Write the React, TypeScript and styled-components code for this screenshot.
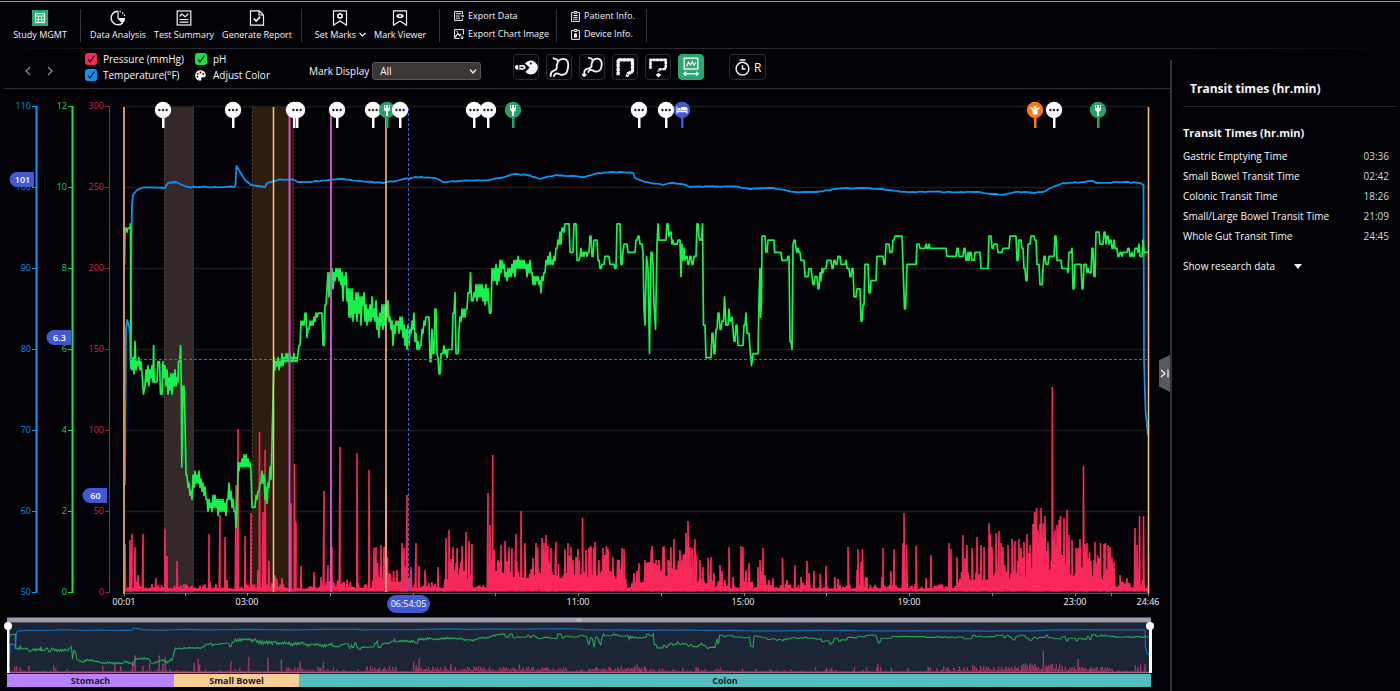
import React from 'react';
import styled, { createGlobalStyle } from 'styled-components';

const GlobalStyle = createGlobalStyle`
  * { box-sizing: border-box; }
  body {
    margin: 0;
    background: #020206;
    color: #f6f6f8;
    font-family: 'Open Sans', 'Noto Sans', sans-serif;
    font-size: 10px;
  }
  button, select, input { font: inherit; color: inherit; }
`;

/* ---------- data ---------- */

type Point = [number, number];
type Band = [number, number, number?];

const makeRandom = (seed: number) => () => {
  seed = (seed * 1664525 + 1013904223) % 4294967296;
  return seed / 4294967296;
};

const PH: Band[] = [
  [124.5, 264], [125, 230], [127, 228, 232], [130, 228, 230], [130.5, 223], [131, 365], [132, 350, 368], [133, 358, 382],
  [134, 357, 375], [135, 341], [136, 360, 369], [139, 356, 366], [142, 360, 373], [143.5, 393], [145, 367, 384],
  [149, 365, 384], [153, 364, 382], [153.6, 345], [154.2, 380], [158, 362, 378], [160.5, 393], [163, 362, 382],
  [166, 362, 384], [168, 372, 394], [172, 372, 394], [175, 370, 394], [177, 378, 385], [178.5, 362, 385],
  [180.6, 346], [181.2, 380], [181.8, 467], [183, 386, 455], [184, 385], [185, 420, 460], [186, 410, 477],
  [187, 474, 485], [190, 484, 495], [192, 490, 498], [193, 474, 490], [196, 471, 484], [199, 471, 486], [202, 482, 492],
  [205, 487, 500], [208, 497, 511], [212, 498, 511], [214, 490, 508], [218, 498, 514], [222, 498, 513], [226, 502, 516],
  [229, 483, 500], [231, 490, 506], [234, 500, 512], [236.2, 527], [237.5, 480, 490], [238, 463, 475], [241, 461, 468],
  [244, 455, 467], [249, 455, 467], [251, 464, 472], [252, 507], [255, 500, 507], [258, 490, 500], [260, 482, 490],
  [262, 471, 480], [264, 475, 492], [266, 488, 513], [268, 482, 503], [270, 465, 480], [271.5, 464, 480], [273, 400],
  [274, 356, 372], [278, 356, 370], [282, 355, 368], [286, 354, 364], [290, 353, 364], [294, 354, 362], [298, 354, 366],
  [299, 345], [301, 320, 328], [304, 318, 326], [305, 315], [307, 334, 338], [309, 321, 329], [313, 318, 326],
  [316, 312, 320], [319, 311, 315], [320, 312, 320], [323, 345], [325, 305], [327, 283, 290], [328, 272, 300],
  [332, 269, 295], [336, 269, 280], [340, 269, 285], [343, 272, 300], [346, 272, 285], [348, 290, 325], [352, 290, 328],
  [357, 290, 322], [361, 285, 325], [364, 292, 310], [366, 305, 335], [370, 305, 325], [372, 298, 325], [376, 302, 325],
  [378, 318, 345], [381, 310, 325], [382, 304, 330], [386, 305, 325], [388, 302, 315], [390, 317, 325], [393, 317, 345],
  [397, 317, 325], [400, 318, 342], [402, 318, 324], [404, 325, 353], [408, 325, 352], [411, 322, 335], [414, 313, 328],
  [416, 335, 353], [420, 345, 353], [423, 318, 335], [426, 317, 322], [428, 318], [430, 360], [432, 330], [433, 352],
  [435, 309], [437, 355], [438, 350, 358], [439, 373], [441, 352], [444, 345, 357], [448, 348, 358], [451, 350],
  [453, 312], [455, 293], [456, 353], [459, 316, 330], [462, 308, 318], [466, 308, 318], [468, 293, 300], [470.5, 273],
  [471.5, 300], [473, 290, 300], [477, 280, 300], [480, 285, 303], [485, 285, 303], [488, 288, 305], [489.5, 313],
  [492, 270, 290], [496, 263, 285], [500, 261, 280], [502, 261, 270], [507, 268, 282], [510, 268, 275], [515, 256, 275],
  [519, 257, 268], [524, 260, 270], [528, 265, 280], [530, 260, 272], [534, 275, 292], [536, 275, 280], [541, 276, 293],
  [543, 273, 282], [547, 255, 265], [550, 254, 266], [554, 258, 265], [557, 240, 250], [560, 232, 245], [562, 226, 240],
  [565, 224, 235], [569, 224], [570, 252], [573, 252], [574, 224], [576, 224], [577, 259], [580, 245, 255],
  [584, 252, 257], [588, 252, 255], [590, 236], [592, 256], [594, 240], [598, 260], [600, 268], [602, 264], [604, 264],
  [605, 256], [608, 256], [610, 264], [615, 264, 267], [617, 224], [619, 224], [621, 263], [623, 240, 253],
  [628, 243, 253], [632, 252], [636, 232, 242], [640, 238, 245], [643, 252], [644, 310], [645, 324], [646.5, 256],
  [648, 268], [649.5, 353], [651, 252], [653, 264], [654, 305], [655.5, 328], [657, 245], [658, 224], [659, 240],
  [664, 241], [667, 225, 235], [672, 235, 245], [678, 242, 250], [681, 240, 276], [685, 250, 260], [690, 258, 268],
  [694, 255, 260], [697, 224], [699, 236], [700, 228, 240], [702.5, 224], [703.5, 325], [706, 357], [710, 350, 357],
  [712, 333, 340], [714, 353], [716, 330, 345], [718, 314], [720, 330, 335], [722, 310, 320], [724.5, 296], [726, 325],
  [729, 309, 325], [733, 322, 330], [734, 340], [736, 325], [738, 345], [743, 345], [744, 325], [746, 313], [747, 335],
  [750, 350], [751.5, 365], [753, 353], [758, 353, 355], [759, 300], [760, 268], [760.6, 316], [761.5, 300], [762, 236],
  [765, 236], [766, 251], [768, 240, 252], [771, 240], [774, 240], [774.5, 252], [779, 252, 257], [782, 260],
  [788, 257, 263], [789, 257], [790, 340], [792, 350], [793, 244], [794, 240], [796, 250, 255], [799, 245, 252],
  [801, 260], [804, 260], [805, 277], [809, 265, 270], [812, 275, 285], [815, 275, 289], [818, 275, 289],
  [821, 268, 280], [824, 268, 272], [827, 261], [831, 260, 268], [834, 260, 285], [836, 260, 265], [838, 256],
  [841, 265], [846, 260, 268], [848, 268, 277], [852, 268, 275], [854, 296], [857, 289], [860, 289], [861, 321],
  [863, 293, 305], [865, 266], [868, 265], [869, 292], [871, 265, 280], [875, 280], [877, 257], [880, 257, 265],
  [884, 256, 265], [886, 244], [890, 245, 252], [893, 240], [895, 236], [902, 236], [903, 263], [904.5, 309],
  [905.5, 309], [907, 265], [915, 265], [917, 244], [920, 248], [926, 244, 249], [930, 244, 248], [938, 248],
  [946, 248], [947, 256], [955, 256], [957, 248], [959, 256], [964, 248, 262], [968, 252, 262], [975, 252, 260],
  [980, 252], [981, 268], [987, 268], [989, 236], [992, 240, 248], [998, 245, 252], [1003, 248], [1009, 248],
  [1010, 236], [1015, 236], [1017, 260], [1019, 240], [1022, 248], [1024, 268], [1026, 280], [1028, 245], [1031, 236],
  [1035, 236, 240], [1037, 265], [1039, 263], [1040, 285], [1043, 255, 268], [1046, 258, 265], [1049, 258],
  [1053, 245, 258], [1055, 236], [1057, 262], [1062, 268, 272], [1068, 272], [1069, 252], [1072, 248], [1073, 288],
  [1075, 265], [1081, 265], [1082, 288], [1084, 265, 275], [1089, 265, 272], [1092, 248], [1094, 276], [1096, 232],
  [1100, 232, 245], [1104, 232, 246], [1110, 240, 248], [1114, 242, 250], [1118, 252, 256], [1122, 250, 256],
  [1128, 248, 256], [1133, 248, 256], [1140, 244, 256], [1144, 240, 252], [1148, 252],
];

const TEMPERATURE: Point[] = [
  [125, 485], [125.5, 400], [126, 330], [127, 320], [129, 326], [130, 336], [130.6, 368], [131, 300], [131.5, 230],
  [132, 205], [133, 195], [137, 190], [143, 187.5], [165, 188], [168, 183], [176, 182], [182, 185], [188, 187],
  [234, 187], [235.5, 185], [236.5, 166], [240, 172], [245, 180], [251, 185], [258, 186], [265, 187], [267, 183],
  [275, 181], [279, 179.5], [293, 179.5], [298, 182], [310, 182], [330, 180], [343, 179], [360, 181], [383, 183],
  [400, 180], [415, 177], [435, 178], [443, 182], [460, 181], [490, 180], [500, 178], [515, 174], [527, 175],
  [540, 179], [556, 175], [572, 176], [585, 177], [598, 173], [620, 172], [633, 173], [635, 178], [645, 182],
  [663, 185], [670, 183], [682, 184], [690, 187], [700, 186.5], [735, 186.5], [750, 189], [770, 188], [785, 190],
  [795, 192], [817, 192], [835, 189], [860, 188], [880, 189], [907, 192], [975, 192], [990, 194], [1005, 194.5],
  [1015, 192], [1035, 193], [1043, 192], [1053, 187], [1063, 183], [1085, 182], [1093, 181], [1096, 183],
  [1125, 182], [1140, 183], [1143.5, 185], [1144, 360], [1145.5, 410], [1148, 435],
];

const PRESSURE_PEAKS: Point[] = [
  [125, 544], [130, 540], [132, 534], [135, 547], [138, 575], [143, 534], [156, 578], [165, 529], [167, 556],
  [177, 561], [209, 534], [210, 582], [220, 515], [225, 537], [227, 580], [236, 485], [238, 429], [245, 536],
  [251, 513], [258, 570], [259.5, 432], [263, 512], [265, 450], [269, 561], [275, 575], [282, 578], [291, 503],
  [294.5, 464], [296, 522], [301, 566], [314, 572], [321, 577], [324, 491], [328, 565], [332, 547], [340, 447],
  [357, 453], [369, 470], [374, 548], [376, 547], [381, 545], [384, 547], [386, 487], [387.5, 557], [402, 543],
  [404, 548], [407, 495], [411, 567], [416, 543], [419, 566], [425, 570], [432, 582], [438, 567], [446, 538],
  [449, 530], [453, 547], [457, 548], [460, 568], [462, 546], [466, 532], [469, 541], [472, 544], [488, 493],
  [490, 525], [492.8, 455], [494, 550], [498, 560], [501, 545], [505, 541], [509, 547], [512, 548], [516, 534],
  [521, 511], [525, 543], [533, 558], [536, 543], [542, 538], [544, 543], [546, 535], [548, 546], [551, 548],
  [556, 542], [565, 549], [568, 543], [571, 547], [573, 560], [578, 549], [582.5, 518], [586, 550], [589, 548],
  [591, 547], [595, 542], [599, 560], [603, 548], [608, 550], [613, 557], [619, 567], [622, 548], [624, 549],
  [634, 573], [639, 563], [645, 560], [648, 562], [652, 546], [656, 560], [659, 560], [663, 547], [664, 546],
  [668, 560], [671, 547], [674, 539], [678, 567], [682, 560], [686, 533], [688, 521], [690, 547], [692, 548],
  [695, 539], [700, 560], [703, 567], [708, 558], [711, 557], [714, 573], [720, 565], [722, 571], [729, 547],
  [733, 577], [741, 546], [743, 547], [746, 570], [749, 563], [758, 567], [760, 560], [763, 548], [765, 575],
  [769, 580], [773, 578], [782.5, 558], [787, 580], [795, 565], [801, 577], [807, 561], [809, 573], [814, 571],
  [820, 574], [826, 566], [835, 577], [838, 579], [848, 547], [857, 570], [858, 549], [861, 562], [862.5, 549],
  [867, 577], [883, 548], [882, 577], [891, 571], [894, 549], [903, 543], [904, 513], [906.5, 545], [916, 546],
  [926, 578], [931, 555], [949, 543], [951, 549], [957, 557], [963, 535], [965, 558], [967, 545], [972, 548],
  [977, 537], [981, 545], [984, 547], [989, 523], [990.5, 534], [992, 547], [996, 533], [999, 531], [1001, 543],
  [1003, 547], [1008, 545], [1012, 539], [1015, 541], [1019, 539], [1021, 549], [1024, 542], [1027, 534], [1030, 545],
  [1033, 524], [1034.5, 512], [1036.5, 508], [1038, 530], [1041, 508], [1043, 530], [1045, 516], [1052.3, 387],
  [1055, 530], [1057, 525], [1059, 520], [1060.5, 516], [1064, 518], [1067, 510], [1069, 535], [1072, 540],
  [1076, 548], [1078, 548], [1080, 539], [1083.5, 466], [1085, 544], [1087, 543], [1091, 561], [1094, 560],
  [1095, 542], [1099, 560], [1100.5, 543], [1104, 544], [1105.5, 543], [1108, 545], [1110, 547], [1114, 562],
  [1120, 575], [1127, 578], [1135, 528], [1137, 545], [1139.5, 516], [1143.5, 516],
];

/* x, height of the busy floor of the trace from there on */
const PRESSURE_FLOOR: Point[] = [
  [124, 5], [133, 16], [142, 6], [262, 10], [272, 16], [277, 6], [310, 9], [326, 22], [333, 11], [372, 28], [386, 26],
  [402, 28], [412, 12], [446, 36], [472, 7], [488, 36], [496, 40], [530, 46], [560, 40], [590, 46], [613, 32],
  [626, 7], [632, 24], [646, 42], [680, 42], [697, 22], [714, 14], [726, 6], [740, 24], [752, 5], [757, 20],
  [765, 8], [828, 6], [856, 14], [866, 6], [958, 24], [975, 30], [1000, 30], [1015, 42], [1032, 68], [1070, 46],
  [1080, 38], [1113, 10], [1130, 14], [1145, 5],
];

/* the sensor reports pH in steps of 0.1 */
const quantize = (y: number) => 592.5 - Math.round((592.5 - y) / 4.05) * 4.05;

const buildPh = () => {
  const random = makeRandom(7);
  const points: Point[] = [];
  let up = false;
  for (let i = 0; i < PH.length - 1; i++) {
    const [x0, t0, b0 = t0] = PH[i];
    const [x1, t1, b1 = t1] = PH[i + 1];
    const noisy = b0 > t0 && b1 > t1;
    const start = quantize(up ? t0 : b0);
    points.push([x0, start]);
    if (noisy) {
      for (let x = x0 + 1; x < x1; x += 1) {
        const f = (x - x0) / (x1 - x0);
        const top = t0 + (t1 - t0) * f;
        const bottom = b0 + (b1 - b0) * f;
        const hold = x0 > 560 && random() < 0.45;
        if (hold) {
          points.push([x, points[points.length - 1][1]]);
          continue;
        }
        up = !up;
        const edge = random() * 0.35;
        points.push([x, quantize(up ? top + (bottom - top) * edge : bottom - (bottom - top) * edge)]);
      }
    } else if (x1 - x0 > 1.5) {
      points.push([x1 - 1, start]);
    }
    up = !up;
  }
  points.push([PH[PH.length - 1][0], PH[PH.length - 1][1]]);
  return points;
};

const buildTemperature = () => {
  const random = makeRandom(21);
  return TEMPERATURE.flatMap(([x, y], i): Point[] => {
    const next = TEMPERATURE[i + 1];
    if (!next || next[0] - x < 8) return [[x, y]];
    const result: Point[] = [[x, y]];
    for (let step = x + 3; step < next[0] - 2; step += 3) {
      const f = (step - x) / (next[0] - x);
      result.push([step, y + (next[1] - y) * f + (random() - 0.5)]);
    }
    return result;
  });
};

const buildPressure = () => {
  const random = makeRandom(99);
  const samples: Point[] = [];
  let zone = 0;
  let low = false;
  for (let x = 124; x < 1148; x += 0.8) {
    while (zone < PRESSURE_FLOOR.length - 1 && PRESSURE_FLOOR[zone + 1][0] <= x) zone++;
    const height = PRESSURE_FLOOR[zone][1];
    low = !low;
    const r = random();
    const floor = height > 20 ? 0.3 : 0.15;
    samples.push([x, low ? 591 - r * 2 : 590 - height * (floor + (1 - floor) * r * r)]);
  }
  PRESSURE_PEAKS.forEach(([x, y]) => {
    samples.push([x - 0.8, 591], [x, y], [x + 0.8, 591]);
  });
  return samples.sort((a, b) => a[0] - b[0]);
};

const toPath = (points: Point[]) =>
  points.map(([x, y], i) => `${i ? 'L' : 'M'}${x.toFixed(1)} ${y.toFixed(1)}`).join('');

const toOverview = (points: Point[]): Point[] =>
  points.map(([x, y]) => [8 + ((x - 124) / 1024) * 1142, 672 - (592 - y) * 0.103]);

const phPoints = buildPh();
const temperaturePoints = buildTemperature();
const pressurePoints = buildPressure();
const phPath = toPath(phPoints);
const temperaturePath = toPath(temperaturePoints);
const pressurePath = toPath(pressurePoints);
const phOverview = toPath(toOverview(phPoints));
const temperatureOverview = toPath(toOverview(temperaturePoints));
const pressureOverview = toPath(toOverview(pressurePoints));

const GRID_ROWS = [106.5, 187.5, 268.5, 349.5, 430.5, 511.5, 592.5];

const AXES = [
  { x: 36, color: '#0a97f5', text: '#0d8ce4', width: 2, labels: ['110', '100', '90', '80', '70', '60', '50'] },
  { x: 72, color: '#15e34b', text: '#15d94a', width: 2, labels: ['12', '10', '8', '6', '4', '2', '0'] },
  { x: 109, color: '#a81c40', text: '#d6244f', width: 1, labels: ['300', '250', '200', '150', '100', '50', '0'] },
];

const READINGS = [
  { x: 9, y: 179.5, value: '101' },
  { x: 46, y: 337.5, value: '6.3' },
  { x: 82, y: 495.5, value: '60' },
];

const TIME_LABELS: [number, string][] = [
  [124, '00:01'], [247, '03:00'], [578, '11:00'], [743, '15:00'], [909, '19:00'], [1075, '23:00'], [1148, '24:46'],
];
const TIME_TICKS = [124, 185, 247, 330, 413, 495, 578, 661, 744, 826, 909, 992, 1075, 1111, 1148];

type PinKind = 'note' | 'meal' | 'sleep' | 'toilet';
const PINS: [number, PinKind][] = [
  [163, 'note'], [233, 'note'], [294, 'note'], [297, 'note'], [337, 'note'], [373, 'note'], [387, 'meal'],
  [400, 'note'], [474, 'note'], [488, 'note'], [513, 'meal'], [639, 'note'], [666, 'note'], [682, 'sleep'],
  [1035, 'toilet'], [1054, 'note'], [1098, 'meal'],
];
const PIN_COLORS: Record<PinKind, string> = { note: '#ffffff', meal: '#26a269', sleep: '#4158d6', toilet: '#fb7a10' };

const TRANSIT_TIMES = [
  ['Gastric Emptying Time', '03:36'],
  ['Small Bowel Transit Time', '02:42'],
  ['Colonic Transit Time', '18:26'],
  ['Small/Large Bowel Transit Time', '21:09'],
  ['Whole Gut Transit Time', '24:45'],
];

/* ---------- layout ---------- */

const Page = styled.div`
  display: flex;
  flex-direction: column;
  min-height: 100vh;
  padding-top: 1px;
`;

const Toolbar = styled.header`
  display: flex;
  align-items: center;
  height: 47px;
  border-top: 1px solid #8d9896;
`;

const Rule = styled.div`
  height: 1px;
  background: linear-gradient(90deg, transparent 10px, #262833 160px, #262833 1150px, transparent 1390px);
`;

const Group = styled.div<{ $width: number; $align?: string }>`
  display: flex;
  align-items: center;
  justify-content: ${p => p.$align || 'center'};
  gap: 8px;
  min-width: ${p => p.$width}px;
  height: 33px;
  border-right: 1px solid #34353f;
  font-size: 9px;
`;

const Stack = styled.div`
  display: flex;
  flex-direction: column;
  gap: 6px;
  padding-left: 14px;
`;

const PlainButton = styled.button`
  display: inline-flex;
  align-items: center;
  gap: 4px;
  padding: 0;
  border: 0;
  background: none;
  white-space: nowrap;
  cursor: pointer;
`;

const ToolButton = styled(PlainButton)`
  flex-direction: column;
  gap: 3px;
  line-height: 12px;
`;

const SmallTool = styled(PlainButton)`
  line-height: 12px;
`;

const Label = styled.span`
  display: inline-flex;
  align-items: center;
  gap: 3px;
`;

const Body = styled.div`
  display: grid;
  grid-template-columns: minmax(0, 1fr) 230px;
  flex: 1;
`;

const ChartColumn = styled.main`
  position: relative;
  display: flex;
  flex-direction: column;
`;

const Controls = styled.div`
  display: flex;
  align-items: center;
  height: 40px;
  margin-left: 4px;
  padding-bottom: 3px;
  border-bottom: 1px solid #2c2d38;
`;

const Pager = styled.div`
  display: flex;
  gap: 12px;
  width: 81px;
  padding: 8px 0 0 19px;
`;

const PagerButton = styled(PlainButton)`
  color: #8f9098;
`;

const Series = styled.fieldset`
  display: grid;
  grid-template-columns: 110px 110px;
  row-gap: 4px;
  width: 224px;
  margin: 0;
  padding: 0;
  border: 0;
`;

const SeriesLabel = styled.label`
  display: flex;
  align-items: center;
  gap: 6px;
  height: 12px;
`;

const CheckBox = styled.span<{ $color: string }>`
  display: grid;
  width: 12px;
  height: 12px;
  border-radius: 3px;
  background: ${p => p.$color};
  & > * { grid-area: 1 / 1; }
  & > svg { pointer-events: none; }
`;

const CheckInput = styled.input`
  appearance: none;
  width: 12px;
  height: 12px;
  margin: 0;
`;

const AdjustButton = styled(PlainButton)`
  height: 12px;
  gap: 7px;
`;

const SelectLabel = styled.label`
  display: flex;
  align-items: center;
  gap: 3px;
  padding-top: 8px;
  white-space: nowrap;
`;

const SelectBox = styled.span`
  display: grid;
  align-items: center;
  width: 109px;
  & > * { grid-area: 1 / 1; }
  & > svg { justify-self: end; margin-right: 4px; pointer-events: none; }
`;

const Select = styled.select`
  appearance: none;
  height: 18px;
  padding: 0 7px;
  border: 1px solid #55555e;
  border-radius: 3px;
  background: #3b3735;
  line-height: 14px;
`;

const ModeBar = styled.div`
  display: flex;
  gap: 7px;
  margin-left: 32px;
`;

const ModeButton = styled.button<{ $active?: boolean; $wide?: boolean }>`
  display: flex;
  align-items: center;
  justify-content: center;
  gap: 3px;
  width: ${p => (p.$wide ? 37 : 26)}px;
  height: 26px;
  padding: 0;
  margin-left: ${p => (p.$wide ? 18 : 0)}px;
  border: 1px solid ${p => (p.$active ? '#29a871' : '#2b2c35')};
  border-radius: 4px;
  background: ${p => (p.$active ? '#29a871' : '#050509')};
  font-size: 12px;
`;

const Drawing = styled.svg`
  display: block;
  width: 100%;
  height: auto;
  text { font-family: 'Open Sans', 'Noto Sans', sans-serif; }
`;

const Regions = styled.div`
  display: flex;
  padding: 0 19px 0 7px;
  font-size: 9px;
  font-weight: 700;
  line-height: 13px;
  text-align: center;
  color: #22222a;
`;

const Region = styled.div<{ $share: number; $color: string }>`
  flex: ${p => p.$share} 1 0;
  background: ${p => p.$color};
`;

const CollapseButton = styled.button`
  position: absolute;
  top: 306px;
  right: 0;
  display: flex;
  align-items: center;
  justify-content: center;
  width: 11px;
  height: 37px;
  padding: 0;
  border: 0;
  background: #59595b;
  clip-path: polygon(0 14%, 100% 0, 100% 100%, 0 86%);
`;

const Side = styled.aside`
  margin-top: 11px;
  padding: 0 3px 0 11px;
  border-left: 2px solid #31323c;
`;

const SideTitle = styled.h1`
  margin: 0;
  padding: 20px 0 9px 7px;
  border-bottom: 1px solid #24252e;
  font-size: 12px;
  line-height: 17px;
  font-weight: 700;
`;

const SideHeading = styled.h2`
  margin: 0;
  padding: 18px 0 6px;
  font-size: 11px;
  line-height: 15px;
  font-weight: 700;
`;

const Times = styled.table`
  width: 206px;
  border-collapse: collapse;
  line-height: 16px;
  th { padding: 2px 0; text-align: left; font-weight: 400; }
  td { padding: 2px 0; text-align: right; color: #d5d5da; }
  tr { height: 20px; }
`;

const ResearchButton = styled(PlainButton)`
  gap: 19px;
  margin-top: 13px;
  line-height: 14px;
`;

/* ---------- icons ---------- */

const Svg = ({ size = 16, w, h, view = '0 0 16 16', children }: { size?: number; w?: number; h?: number; view?: string; children: React.ReactNode }) => (
  <svg width={w || size} height={h || size} viewBox={view} fill="none" stroke="currentColor" strokeWidth="1.2" aria-hidden="true">
    {children}
  </svg>
);

const StudyIcon = () => (
  <Svg>
    <rect x="0" y="0" width="16" height="16" fill="#29a871" stroke="none" />
    <rect x="3.5" y="3.5" width="9" height="9" />
    <path d="M3.5 6h9M3.5 9.3h9M6.5 6v6.5M9.5 6v6.5" strokeWidth="1" />
  </Svg>
);

const AnalysisIcon = () => (
  <Svg>
    <path d="M7.6 1.200A6.800 6.800 0 1 0 12.800 12.800" strokeWidth="1.400" />
    <path d="M8.500 8h6.700a7 7 0 0 1-2.200 4.800z" fill="currentColor" stroke="none" />
    <path d="M9.500 1.300a6.800 6.800 0 0 1 5.400 5.500" strokeDasharray="1.600 1.200" />
    <path d="M8 .8V8.200l4.600 4.600" />
  </Svg>
);

const SummaryIcon = () => (
  <Svg>
    <rect x="1.2" y="1" width="13.6" height="14" />
    <path d="M3.5 6.5 6 4l3 2.6 3.4-2.8M3.5 9.5h9M3.5 12.2h9" />
  </Svg>
);

const ReportIcon = () => (
  <Svg>
    <path d="M1.5.8h8.800l4.200 4.200v10.200h-13zM10 .8V5h4.400" />
    <path d="m4.800 8.600 2.400 2.400 4-4.400" strokeWidth="1.6" />
  </Svg>
);

const SetMarkIcon = () => (
  <Svg>
    <path d="M1.5.8h13v14.400L8 11l-6.500 4.200z" />
    <circle cx="8" cy="6" r="2" strokeWidth="1.400" />
    <path d="M8 2.800v1M8 8.200v1M5.200 4.400l.9.500M9.900 7.100l.9.500M5.200 7.600l.9-.5M9.900 4.900l.9-.5" />
  </Svg>
);

const ViewerIcon = () => (
  <Svg>
    <path d="M1.5.8h13v14.400L8 11l-6.500 4.200z" />
    <path d="M4 6c2.200-3 5.800-3 8 0-2.200 3-5.800 3-8 0z" fill="currentColor" stroke="none" />
    <circle cx="8" cy="6" r="1.100" fill="#020206" stroke="none" />
  </Svg>
);

const ExportDataIcon = () => (
  <Svg w={10} h={10} view="0 0 10 10">
    <path d="M8.500 3V.6H.6v8.800h7.900V7.500M2 2.700h5M2 5h3.500M2 7.200h4M6.500 5h3M8.300 3.700 9.600 5 8.300 6.300" strokeWidth="1" />
  </Svg>
);

const ExportImageIcon = () => (
  <Svg w={10} h={10} view="0 0 10 10">
    <path d="M9.400 5.500V.6H.6v8.800H5.500" strokeWidth="1" />
    <path d="M1 8.500 3.800 4.500 5.500 6.500 7 5.300" />
    <circle cx="3.200" cy="2.800" r=".7" fill="currentColor" stroke="none" />
    <path d="M8 6.500v3.200M6.500 8.300 8 9.700l1.500-1.400" strokeWidth="1" />
  </Svg>
);

const PatientIcon = () => (
  <Svg w={9} h={11} view="0 0 9 11">
    <path d="M2.500 1.500H.6v8.900h7.800V1.500H6.500M3 .6h3v1.800H3zM2.300 4.500h4.400M2.300 6.300h4.400M2.300 8.200h4.400" strokeWidth="1" />
  </Svg>
);

const DeviceIcon = () => (
  <Svg w={9} h={11} view="0 0 9 11">
    <path d="M2.500 1.500H.6v8.900h7.800V1.500H6.500M3 .6h3v1.800H3z" strokeWidth="1" />
    <rect x="3" y="4" width="3" height="4.800" rx="1.500" fill="currentColor" stroke="none" />
  </Svg>
);

const Chevron = ({ d, w = 6, h = 10 }: { d: string; w?: number; h?: number }) => (
  <Svg w={w} h={h} view={`0 0 ${w} ${h}`}>
    <path d={d} />
  </Svg>
);

const PaletteIcon = () => (
  <Svg size={11} view="0 0 12 12">
    <path
      d="M6 .3C2.700.3.2 2.700.2 6s2.500 5.700 5.400 5.700c1.400 0 1.700-1 1.200-1.900-.5-1 .2-1.900 1.400-1.900h1.600c1.200 0 2-.8 2-2C11.800 2.700 9.300.3 6 .3z"
      fill="currentColor"
      stroke="none"
    />
    <g fill="#020206" stroke="none">
      <circle cx="3" cy="4.200" r="1" />
      <circle cx="6" cy="2.700" r="1" />
      <circle cx="9" cy="4.200" r="1" />
      <circle cx="2.700" cy="7.200" r="1" />
    </g>
  </Svg>
);

const CapsuleIcon = () => (
  <Svg size={24} view="0 0 24 24">
    <path d="M15.500 12.400 11 8.600A7 7 0 1 1 11.400 17z" fill="currentColor" stroke="none" />
    <circle cx="16.800" cy="8.500" r="1" fill="#050509" stroke="none" />
    <rect x="1" y="9.900" width="10.500" height="4.800" rx="2.400" fill="currentColor" stroke="none" />
    <path d="M4.800 9.900v4.800M6.500 12.300h3" stroke="#050509" />
  </Svg>
);

const StomachIcon = () => (
  <Svg size={22} view="0 0 24 24">
    <path
      d="M6 2.500c3.500.5 5 2 4.500 5-.3 1.500-1.500 2.500-1 4 .5 2-.5 3.500-3 4.500-2.500.8-4 2.500-3.500 6M11.500 5.500c2-3 8-3.500 9.800.3 1.200 3.500.7 8.200-.8 11.700-1.500 3-5.500 3.800-8.500 2.200-2.500-1.300-5-.7-5.500 2.300"
      strokeWidth="2"
      strokeLinecap="round"
    />
  </Svg>
);

const StomachExitIcon = () => (
  <Svg size={22} view="0 0 24 24">
    <path
      d="M8.500 2c3 .3 4.500 1.500 4 4-.4 2-1.500 2.500-1 4 .3 1.500-1 3-3 3.500-2 .4-4 1-4.500 3M13 5c2-3 7.500-3 9 .5 1 3.500.5 7-1 9.500-2 2.500-5.500 2.500-8 .8-2-1.300-4.500-.8-5 1.700"
      strokeWidth="2"
      strokeLinecap="round"
    />
    <path d="M3.500 16.500v5M1.200 19.800l2.300 2.200 2.300-2.200" strokeWidth="1.800" />
  </Svg>
);

const ColonIcon = () => (
  <Svg size={22} view="0 0 24 24">
    <path
      d="M4.500 21V4.200H20.200V15.500c0 2-1.500 2.700-3.200 3-1.700.4-2.500 1.500-2.500 4"
      strokeWidth="3.600"
      strokeDasharray="3.600 .7"
      strokeLinejoin="round"
    />
    <path d="M4.500 19V4.200H20.200V15.500c0 2-1.500 2.700-3.200 3" strokeWidth="2.400" strokeLinejoin="round" />
  </Svg>
);

const ColonExitIcon = () => (
  <Svg size={22} view="0 0 24 24">
    <path d="M3.800 14V4.200H20.500V12c0 2-1.500 2.500-3.500 2.500h-2c-1.700 0-2.500 1-2.500 2.500" strokeWidth="2.800" strokeDasharray="3.200 .8" strokeLinejoin="round" />
    <path d="M3.800 13V4.200H20.500V12c0 2-1.500 2.500-3.500 2.500" strokeWidth="1.800" />
    <path d="M12.500 18.500V22M10.200 20l2.300 2.200 2.300-2.200" strokeWidth="1.800" />
  </Svg>
);

const MonitorIcon = () => (
  <Svg size={20} view="0 0 20 20">
    <rect x="3.200" y="1.200" width="13.600" height="10.800" strokeWidth="1.400" />
    <path d="M5.500 9.500 7.500 5l2 3 2-3.500 1.500 4 1.800-3" />
    <path d="M3.500 16.800h13M5 14.800l-2.300 2L5 18.800M15 14.800l2.300 2-2.300 2" strokeWidth="1.400" />
  </Svg>
);

const StopwatchIcon = () => (
  <Svg size={17} view="0 0 17 17">
    <circle cx="8.500" cy="9.700" r="6.400" strokeWidth="1.500" />
    <path d="M8.500 6.300v3.600h3M5.500 1h6" strokeWidth="1.500" />
  </Svg>
);

/* ---------- parts ---------- */

const SeriesCheck = ({ color, children }: { color: string; children: React.ReactNode }) => (
  <SeriesLabel>
    <CheckBox $color={color}>
      <CheckInput type="checkbox" defaultChecked />
      <Svg size={12} view="0 0 12 12">
        <path d="M3 6.500 5 9l4.500-6.500" stroke="#0c0c12" />
      </Svg>
    </CheckBox>
    {children}
  </SeriesLabel>
);

const Pin = ({ x, kind }: { x: number; kind: PinKind }) => {
  const color = PIN_COLORS[kind];
  return (
    <g transform={`translate(${x} 110)`}>
      <rect x="-1" y="6" width="2.500" height="12" fill={color} />
      <circle r="8.200" fill={color} />
      {kind === 'note' && [-3.600, 0, 3.600].map(dx => <circle key={dx} cx={dx} cy="0" r="1.200" fill="#222" />)}
      {kind === 'meal' && (
        <path d="M-3-5v4c0 1.800 1 2.200 2 2.500V6h2V1.500c1-.3 2-.7 2-2.500v-4h-1v3h-1v-3h-2v3h-1v-3z" fill="#fff" />
      )}
      {kind === 'sleep' && <path d="M-5.500-3.500h1v4h10v3h-1.200v-1.300h-8.600v1.300h-1.200zM-4-2h2.500V0H-4zM-1-3h4.500c1.200 0 2 .7 2 1.800V0H-1z" fill="#fff" />}
      {kind === 'toilet' && (
        <g>
          <circle cy="-2.500" r="1.800" fill="#fff" />
          <path d="M-4.500-2.500-1.500 0h3l3-2.500M0 0v4.500" stroke="#fff" strokeWidth="1.500" fill="none" />
          <rect x="-2.500" y="-.2" width="5" height="4.800" rx="1" fill="#fff" />
        </g>
      )}
    </g>
  );
};

const Chart = () => (
  <Drawing viewBox="0 89 1170 526" role="img" aria-label="Pressure, temperature and pH over time">
    {GRID_ROWS.map(y => (
      <path key={y} d={`M124 ${y}H1148`} stroke="#1d1d20" strokeWidth="1.500" />
    ))}
    <rect x="164" y="107" width="30" height="486" fill="#342828" />
    <rect x="252" y="107" width="42" height="486" fill="#2e1c0f" />
    <path d="M164.500 107V592M193.500 107V592M252.500 107V592M294 107V592" stroke="#4a3c30" strokeDasharray="2 2" />

    <path d={pressurePath} fill="none" stroke="#f8285a" strokeWidth="1.600" strokeLinejoin="bevel" />
    <path d="M124 590.500H1148" stroke="#f8285a" strokeWidth="2" />
    <path d={temperaturePath} fill="none" stroke="#0b93f0" strokeWidth="1.800" strokeLinejoin="round" />
    <path d={phPath} fill="none" stroke="#17f24c" strokeWidth="1.700" strokeLinejoin="round" />

    <path d="M124 359.500H1148M408.500 108V593" stroke="#4a62d8" strokeDasharray="3 2" />
    <g fill="none" strokeWidth="2">
      <path d="M124 107V594" stroke="#d8935c" />
      <path d="M273.500 107V592M386 107V592M1148.500 107V594" stroke="#f5bd78" strokeWidth="1.600" />
      <path d="M289.500 107V592M331 107V592" stroke="#cf4fc4" />
    </g>

    {AXES.map(axis => (
      <g key={axis.x}>
        <path d={`M${axis.x + 0.5} 106V593`} stroke={axis.color} strokeWidth={axis.width} />
        {GRID_ROWS.map((y, i) => (
          <g key={y}>
            <path d={`M${axis.x - 4} ${y}h4`} stroke={axis.color} />
            <text x={axis.x - 5} y={y + 2.500} textAnchor="end" fontSize="9" fill={axis.text}>
              {axis.labels[i]}
            </text>
          </g>
        ))}
      </g>
    ))}

    {READINGS.map(reading => (
      <g key={reading.value}>
        <path d={`M${reading.x + 8} ${reading.y - 7.500}h17v15h-17a7.500 7.500 0 0 1 0-15z`} fill="#4158d6" />
        <text x={reading.x + 13.500} y={reading.y + 3} textAnchor="middle" fontSize="9" fontWeight="600" fill="#fff">
          {reading.value}
        </text>
      </g>
    ))}

    <path d="M124 593.500H1148" stroke="#55555c" />
    {TIME_TICKS.map(x => (
      <path key={x} d={`M${x + 0.5} 593v3`} stroke="#8a8a90" />
    ))}
    {TIME_LABELS.map(([x, label]) => (
      <text key={label} x={x} y="605" textAnchor="middle" fontSize="9" fill="#f6f6f8">
        {label}
      </text>
    ))}
    <rect x="387" y="595" width="43" height="18" rx="9" fill="#4158d6" />
    <text x="408.500" y="607" textAnchor="middle" fontSize="9" fill="#fff">
      06:54:05
    </text>

    {PINS.map(([x, kind]) => (
      <Pin key={x} x={x} kind={kind} />
    ))}
  </Drawing>
);

const Overview = () => (
  <Drawing viewBox="0 615 1170 59" role="img" aria-label="Whole recording">
    <rect x="7" y="617.500" width="1144" height="5" fill="#9b9eb2" />
    <path d="M576.500 619h5M576.500 621h5" stroke="#d8dae4" strokeWidth=".8" />
    <rect x="7" y="623" width="1144" height="51" fill="#1c2536" />
    <path d={pressureOverview} fill="none" stroke="#c43a6c" strokeWidth=".9" opacity=".8" />
    <path d="M8 672.500H1150" stroke="#b05f88" strokeWidth="1.200" />
    <path d={temperatureOverview} fill="none" stroke="#1768b0" strokeWidth="1.300" />
    <path d={phOverview} fill="none" stroke="#27a456" strokeWidth="1.100" />
    <g fill="#fff">
      <rect x="7" y="627" width="2.500" height="46" />
      <circle cx="8" cy="626" r="4" />
      <rect x="1149" y="627" width="3" height="46" />
      <circle cx="1150" cy="626" r="4" />
    </g>
  </Drawing>
);

export default function App() {
  return (
    <>
      <GlobalStyle />
      <Page>
        <Toolbar>
          <Group $width={81}>
            <ToolButton><StudyIcon />Study MGMT</ToolButton>
          </Group>
          <Group $width={221}>
            <ToolButton><AnalysisIcon />Data Analysis</ToolButton>
            <ToolButton><SummaryIcon />Test Summary</ToolButton>
            <ToolButton><ReportIcon />Generate Report</ToolButton>
          </Group>
          <Group $width={138}>
            <ToolButton>
              <SetMarkIcon />
              <Label>Set Marks<Chevron w={7} h={5} d="M.5 1 3.500 4l3-3" /></Label>
            </ToolButton>
            <ToolButton><ViewerIcon />Mark Viewer</ToolButton>
          </Group>
          <Group $width={117} $align="flex-start">
            <Stack>
              <SmallTool><ExportDataIcon />Export Data</SmallTool>
              <SmallTool><ExportImageIcon />Export Chart Image</SmallTool>
            </Stack>
          </Group>
          <Group $width={90} $align="flex-start">
            <Stack>
              <SmallTool><PatientIcon />Patient Info.</SmallTool>
              <SmallTool><DeviceIcon />Device Info.</SmallTool>
            </Stack>
          </Group>
        </Toolbar>
        <Rule />

        <Body>
          <ChartColumn>
            <Controls>
              <Pager>
                <PagerButton aria-label="Previous"><Chevron w={10} h={10} d="M7 1 3 5l4 4" /></PagerButton>
                <PagerButton aria-label="Next"><Chevron w={10} h={10} d="M3 1l4 4-4 4" /></PagerButton>
              </Pager>
              <Series>
                <SeriesCheck color="#f8285a">Pressure (mmHg)</SeriesCheck>
                <SeriesCheck color="#17e04c">pH</SeriesCheck>
                <SeriesCheck color="#0b93f5">Temperature(°F)</SeriesCheck>
                <AdjustButton><PaletteIcon />Adjust Color</AdjustButton>
              </Series>
              <SelectLabel>
                Mark Display
                <SelectBox>
                  <Select defaultValue="All">
                    <option>All</option>
                  </Select>
                  <Chevron w={8} h={5} d="M1 .5 4 4 7 .5" />
                </SelectBox>
              </SelectLabel>
              <ModeBar>
                <ModeButton aria-label="Ingestion"><CapsuleIcon /></ModeButton>
                <ModeButton aria-label="Stomach"><StomachIcon /></ModeButton>
                <ModeButton aria-label="Stomach exit"><StomachExitIcon /></ModeButton>
                <ModeButton aria-label="Colon"><ColonIcon /></ModeButton>
                <ModeButton aria-label="Colon exit"><ColonExitIcon /></ModeButton>
                <ModeButton aria-label="Fit recording" $active><MonitorIcon /></ModeButton>
                <ModeButton $wide><StopwatchIcon />R</ModeButton>
              </ModeBar>
            </Controls>
            <Chart />
            <Overview />
            <Regions>
              <Region $share={167} $color="#b983ff">Stomach</Region>
              <Region $share={125} $color="#f6cd92">Small Bowel</Region>
              <Region $share={852} $color="#54bdbd">Colon</Region>
            </Regions>
            <CollapseButton aria-label="Collapse panel">
              <Chevron w={9} h={9} d="M1 1l4 3.500L1 8M8 .5v8" />
            </CollapseButton>
          </ChartColumn>

          <Side>
            <SideTitle>Transit times (hr.min)</SideTitle>
            <SideHeading>Transit Times (hr.min)</SideHeading>
            <Times>
              <tbody>
                {TRANSIT_TIMES.map(([name, time]) => (
                  <tr key={name}>
                    <th scope="row">{name}</th>
                    <td>{time}</td>
                  </tr>
                ))}
              </tbody>
            </Times>
            <ResearchButton>
              Show research data
              <Svg w={8} h={5} view="0 0 8 5">
                <path d="M0 0h8L4 5z" fill="currentColor" stroke="none" />
              </Svg>
            </ResearchButton>
          </Side>
        </Body>
      </Page>
    </>
  );
}
